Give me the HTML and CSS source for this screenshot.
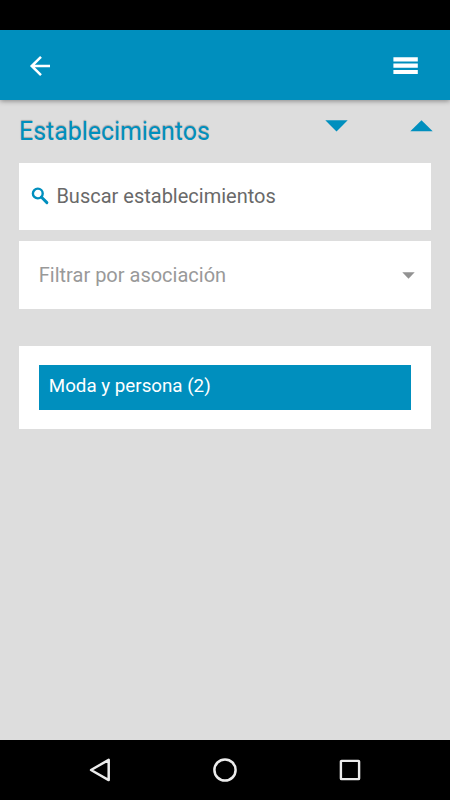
FILE: index.html
```html
<!DOCTYPE html>
<html lang="es">
<head>
<meta charset="utf-8">
<title>Establecimientos</title>
<link rel="stylesheet" href="styles.css">
</head>
<body>
<div class="status"></div>
<header class="appbar">
  <svg class="back" width="22" height="22" viewBox="0 0 22 22"><path d="M12 1.8 2.7 11l9.3 9.2M2.7 11H21" fill="none" stroke="#fff" stroke-width="2.5"/></svg>
  <svg class="menu" width="25" height="18" viewBox="0 0 25 18"><path d="M.4 .3h24.4v4.2H.4zM.4 6.6h24.4v4.1H.4zM.4 12.9h24.4v4H.4z" fill="#fff"/></svg>
</header>
<main class="content">
  <div class="heading">
    <h1 class="title">Establecimientos</h1>
    <svg class="down" width="23" height="12" viewBox="0 0 23 12"><path d="M.3 .3h22.4L11.5 11.5z" fill="#008fbe"/></svg>
    <svg class="up" width="23" height="12" viewBox="0 0 23 12"><path d="M.3 11.3h22.4L11.5 .2z" fill="#008fbe"/></svg>
  </div>
  <div class="card search">
    <svg class="glass" width="18" height="18" viewBox="0 0 18 18"><circle cx="6.8" cy="6.5" r="4.9" fill="none" stroke="#008fbe" stroke-width="2.4"/><path d="M10.3 10l5.6 5.6" stroke="#008fbe" stroke-width="2.9" stroke-linecap="round"/></svg>
    <span class="search-text">Buscar establecimientos</span>
  </div>
  <div class="card filter">
    <span class="filter-text">Filtrar por asociación</span>
    <svg width="13" height="7" viewBox="0 0 13 7"><path d="M.3 .3h12.4L6.5 6.7z" fill="#929292"/></svg>
  </div>
  <div class="card list">
    <div class="item"><span class="item-text">Moda y persona (2)</span></div>
  </div>
</main>
<nav class="navbar">
  <svg width="24" height="26" viewBox="0 0 24 26"><path d="M20.7 2.9v20.2L3 13z" fill="none" stroke="#ececec" stroke-width="2.5" stroke-linejoin="round"/></svg>
  <svg width="26" height="26" viewBox="0 0 26 26"><circle cx="13" cy="13" r="10.6" fill="none" stroke="#ececec" stroke-width="2.5"/></svg>
  <svg width="24" height="26" viewBox="0 0 24 26"><rect x="2.9" y="3.9" width="18.2" height="18.2" rx=".7" fill="none" stroke="#ececec" stroke-width="2.4"/></svg>
</nav>
</body>
</html>
```
FILE: styles.css
```css
* { box-sizing: border-box; }
body {
  margin: 0;
  width: 450px;
  height: 800px;
  display: flex;
  flex-direction: column;
  overflow: hidden;
  background: #ddd;
  font-family: Roboto, sans-serif;
  font-size: 20px;
}
svg { display: block; flex: none; }
.status { height: 30px; background: #000; }
.appbar {
  height: 70px;
  display: flex;
  align-items: center;
  justify-content: space-between;
  padding: 2px 32px 0 29px;
  background: #008fbe;
  box-shadow: 0 1px 5px rgba(0, 0, 0, .4);
}
.content { flex: 1; padding: 0 19px; }
.heading {
  height: 62.5px;
  display: flex;
  align-items: flex-start;
  margin-right: -2px;
}
.title {
  flex: 1;
  margin: 0;
  padding-top: 17px;
  font-size: 24.9px;
  line-height: 30px;
  font-weight: 400;
  color: #008fbe;
  text-shadow: 0 -1px 1px rgba(0, 0, 0, .25);
}
.down { margin: 20px 62px 0 0; }
.up { margin-top: 20px; }
.card { background: #fff; display: flex; align-items: center; }
.search { height: 67.5px; padding-left: 11.6px; }
.search-text { margin-left: 7.8px; color: #696969; }
.filter {
  height: 67.7px;
  margin-top: 11.2px;
  padding: 0 16px 0 19.8px;
  justify-content: space-between;
  color: #999;
}
.list { height: 82.6px; margin-top: 37.4px; padding: 0 20.2px 0 20px; }
.item {
  flex: 1;
  height: 45px;
  padding: 9px 9.8px 7px;
  background: #008fbe;
  color: #fff;
  font-size: 18.75px;
  line-height: 25px;
}
.navbar {
  height: 60px;
  display: flex;
  align-items: center;
  justify-content: space-between;
  padding: 0 88px;
  background: #000;
}
```
